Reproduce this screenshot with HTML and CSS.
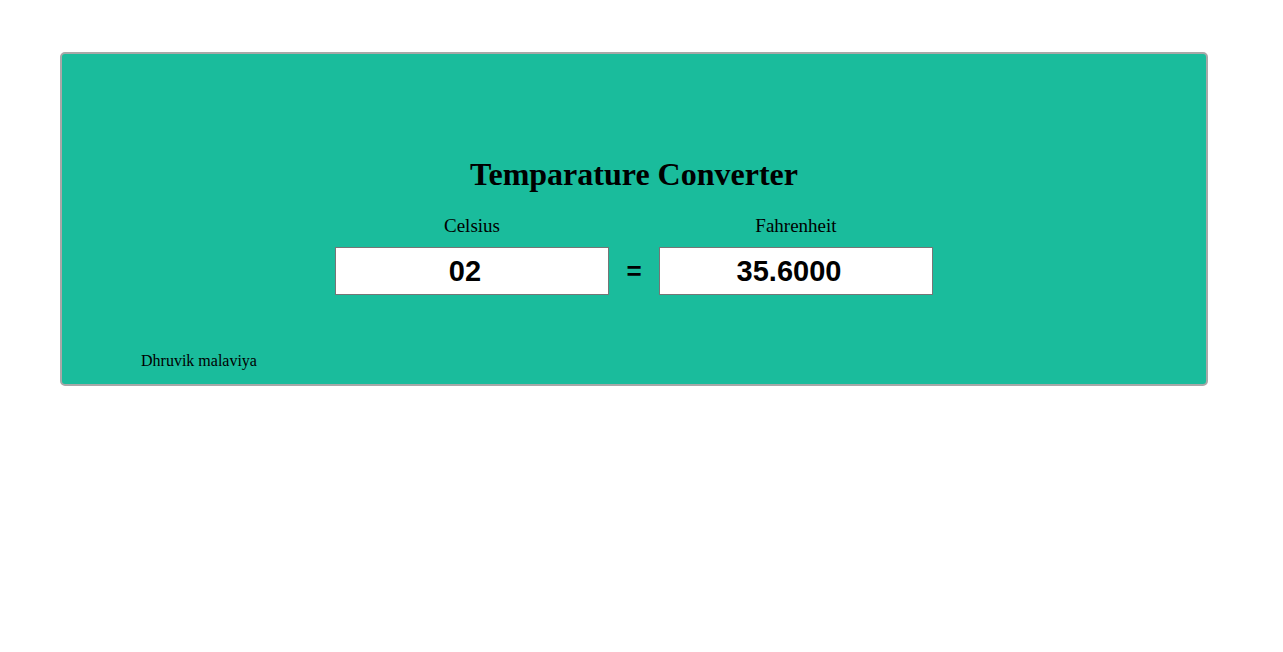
FILE: index.html
```html
<!DOCTYPE html>
<html>
<head>
<meta charset="utf-8">
<link rel="stylesheet" href="styles.css">
</head>
<body>
<div class="card">
  <h2 class="title">Temparature Converter</h2>
  <div class="row">
    <div class="col">
      <label class="lbl">Celsius</label>
      <input class="inp" type="text" value="02">
    </div>
    <div class="eq">=</div>
    <div class="col">
      <label class="lbl">Fahrenheit</label>
      <input class="inp" type="text" value="35.6000">
    </div>
  </div>
  <div class="footer">Dhruvik malaviya</div>
</div>
</body>
</html>
```

FILE: styles.css
```css
html, body { margin: 0; padding: 0; background: #fff; }
body { font-family: "Liberation Serif", "Times New Roman", serif; }
.card {
  margin: 52px 75px 0 60px;
  height: 330px;
  border: 2px solid #a8a8a8;
  border-radius: 5px;
  background: #1abc9c;
  display: flex;
  flex-direction: column;
  align-items: center;
  box-sizing: content-box;
}
.title {
  margin: 103px 0 0 0;
  font-size: 32px;
  line-height: 34px;
  font-weight: bold;
  color: #000;
}
.row {
  margin-top: 24px;
  display: flex;
  align-items: flex-end;
}
.col {
  width: 274px;
  display: flex;
  flex-direction: column;
  align-items: center;
}
.lbl {
  font-size: 19px;
  line-height: 22px;
  margin-bottom: 10px;
}
.inp {
  width: 274px;
  height: 48px;
  box-sizing: border-box;
  border: 1px solid #767676;
  background: #fff;
  text-align: center;
  font-family: "Liberation Sans", Arial, sans-serif;
  font-weight: bold;
  font-size: 29px;
  color: #000;
  padding: 0 14px 0 0;
  margin: 0;
  outline: none;
}
.eq {
  width: 50px;
  text-align: center;
  font-family: "Liberation Sans", Arial, sans-serif;
  font-weight: bold;
  font-size: 26px;
  line-height: 48px;
}
.footer {
  align-self: flex-start;
  margin-top: 57px;
  margin-left: 79px;
  font-size: 16px;
  line-height: 18px;
}
```
